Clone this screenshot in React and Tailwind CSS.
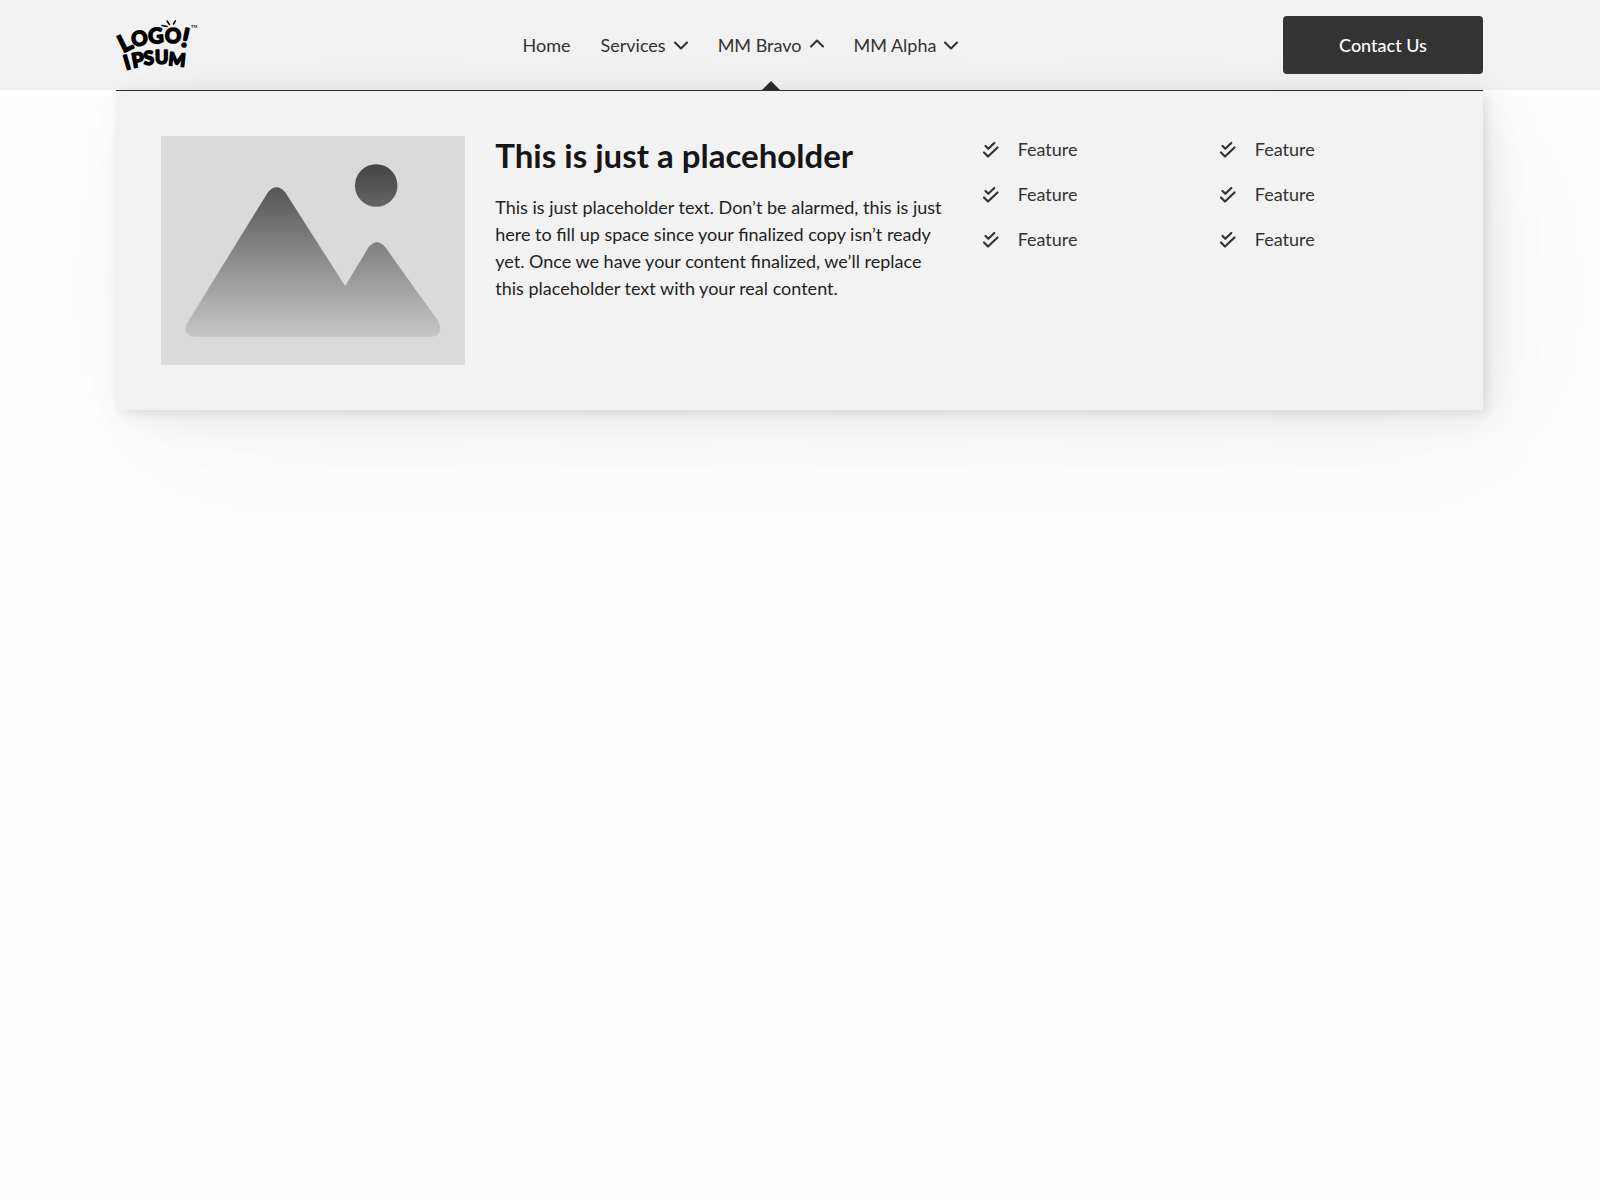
const navItems = [
  { label: 'Home' },
  { label: 'Services', menu: true },
  { label: 'MM Bravo', menu: true, open: true },
  { label: 'MM Alpha', menu: true },
]

const features = ['Feature', 'Feature', 'Feature', 'Feature', 'Feature', 'Feature']

function Logo() {
  return (
    <svg viewBox="0 0 82 56" className="h-14 w-[82px] overflow-visible" role="img" aria-label="Logoipsum">
      <g
        className="fill-black stroke-black font-['Lato',sans-serif] font-bold"
        strokeWidth="1.7"
        strokeLinejoin="round"
        strokeLinecap="round"
      >
        <text fontSize="24" transform="translate(7 36) rotate(-26)">L</text>
        <text fontSize="20" transform="translate(17 30) rotate(-12)">O</text>
        <text fontSize="21" transform="translate(33 27) rotate(-6)">G</text>
        <text fontSize="20" transform="translate(49 26)">O</text>
        <text fontSize="26" transform="translate(64 29) rotate(12)">!</text>
        <text fontSize="20" transform="translate(10 53) rotate(-16)">I</text>
        <text fontSize="20" transform="translate(17 51) rotate(-10)">P</text>
        <text fontSize="19" transform="translate(28 48) rotate(-4)">S</text>
        <text fontSize="18" transform="translate(39 47)">U</text>
        <text fontSize="18" transform="translate(52 48) rotate(6)">M</text>
      </g>
      <path d="M46 8.500l5 1M51 4l2.500 3.500M57.500 7l1.800-3" fill="none" stroke="#000" strokeWidth="1.500" strokeLinecap="round" />
      <text x="75" y="11" fontSize="4" className="fill-black font-['Lato',sans-serif] font-bold">TM</text>
    </svg>
  )
}

function Chevron({ up }) {
  return (
    <svg viewBox="0 0 14 14" className="h-3.5 w-3.5" fill="none" stroke="currentColor" strokeWidth="2.1" strokeLinecap="round" strokeLinejoin="round">
      <path d={up ? 'm1 8.500 6-6 6 6' : 'm1 4.500 6 6 6-6'} />
    </svg>
  )
}

function DoubleCheck() {
  return (
    <svg viewBox="0 0 18 18" className="h-[18px] w-[18px] shrink-0" fill="none" stroke="currentColor" strokeWidth="2.2" strokeLinecap="round" strokeLinejoin="round">
      <path d="m3.500 5 2.800 2.800 6-5.800" />
      <path d="m2 11.500 4 4L15.500 6.500" />
    </svg>
  )
}

function PlaceholderImage() {
  return (
    <svg viewBox="0 0 304 229" className="block w-full bg-[#dadada]" role="img" aria-label="Placeholder">
      <defs>
        <linearGradient id="fade" gradientUnits="userSpaceOnUse" x1="0" y1="28" x2="0" y2="200">
          <stop offset="0" stopColor="#444444" />
          <stop offset="1" stopColor="#c6c6c6" />
        </linearGradient>
      </defs>
      <g fill="url(#fade)">
        <circle cx="215" cy="49.500" r="21.300" />
        <path d="M26 187 107 56Q115.500 46.500 124 56L184 150 207.500 111Q215.700 101.500 224 111L277 185Q283 200 270 200.500H34Q21 200 26 187Z" />
      </g>
    </svg>
  )
}

function NavItem({ item }) {
  if (!item.menu) {
    return <a href="#" className="flex items-center">{item.label}</a>
  }

  return (
    <button type="button" aria-expanded={Boolean(item.open)} className="relative flex cursor-pointer items-center gap-2">
      {item.label}
      <Chevron up={item.open} />
      {item.open && (
        <svg viewBox="0 0 18 9" className="absolute bottom-0 left-1/2 h-[9px] w-[18px] -translate-x-1/2 fill-[#2e2e2e]">
          <path d="M0 9 9 0l9 9z" />
        </svg>
      )}
    </button>
  )
}

function MegaMenu() {
  return (
    <section className="relative grid grid-cols-[2fr_3fr_3fr] items-start gap-[30px] border-t border-[#2e2e2e] bg-[#f2f2f2] p-[45px] shadow-[4px_3px_10px_rgba(0,0,0,0.07),8px_8px_30px_rgba(0,0,0,0.06),16px_16px_70px_rgba(0,0,0,0.03),30px_36px_170px_rgba(0,0,0,0.04)]">
      <PlaceholderImage />
      <div>
        <h2 className="text-[33px] leading-[38px] font-bold text-[#161616]">This is just a placeholder</h2>
        <p className="mt-5 text-lg leading-[27px] text-[#1f1f1f]">
          This is just placeholder text. Don’t be alarmed, this is just here to fill up space since your finalized copy
          isn’t ready yet. Once we have your content finalized, we’ll replace this placeholder text with your real
          content.
        </p>
      </div>
      <ul className="grid grid-cols-2 gap-[18px]">
        {features.map((feature, index) => (
          <li key={index} className="flex items-center gap-[18px] text-lg leading-[27px]">
            <DoubleCheck />
            {feature}
          </li>
        ))}
      </ul>
    </section>
  )
}

export default function App() {
  return (
    <div className="min-h-screen overflow-x-hidden bg-[#fefefe] font-['Lato',sans-serif] text-[#333333]">
      <header className="flex h-[90px] items-center justify-between bg-[#f2f2f2] pr-[117px] pl-[116px]">
        <a href="#">
          <Logo />
        </a>
        <nav className="flex gap-[30px] self-stretch text-lg">
          {navItems.map((item) => (
            <NavItem key={item.label} item={item} />
          ))}
        </nav>
        <button type="button" className="relative z-10 h-[58px] w-[200px] cursor-pointer rounded bg-[#333333] text-lg font-medium text-white">
          Contact Us
        </button>
      </header>
      <div className="pr-[117px] pl-[116px]">
        <MegaMenu />
      </div>
    </div>
  )
}
